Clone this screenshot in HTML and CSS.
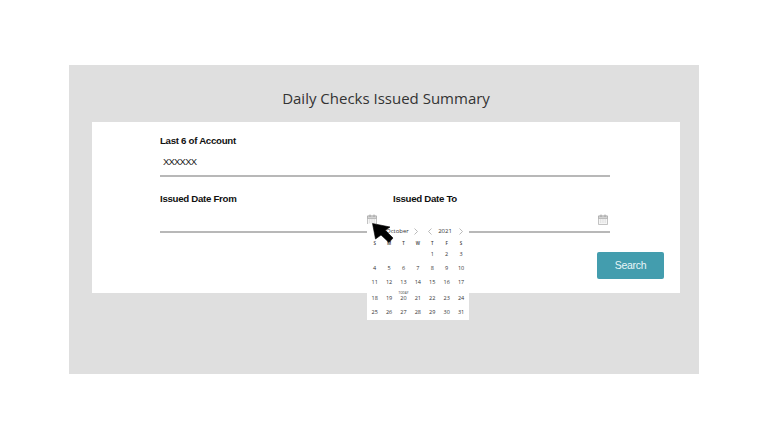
FILE: index.html
```html
<!DOCTYPE html>
<html lang="en">
<head>
<meta charset="utf-8">
<title>Daily Checks Issued Summary</title>
<link rel="stylesheet" href="styles.css">
</head>
<body>
<main class="panel">
  <h1 class="title">Daily Checks Issued Summary</h1>
  <section class="card">
    <div class="fields">
      <div class="field">
        <label class="label">Last 6 of Account</label>
        <div class="value">XXXXXX</div>
      </div>
      <div class="date-row">
        <div class="field date-field">
          <label class="label">Issued Date From</label>
          <div class="value">
            <svg class="cal-icon" viewBox="0 0 10 11"><path class="cal-body" d="M.5 2h9v8.500h-9z"/><path class="cal-head" d="M.5 2h9v2.500h-9z"/><path class="cal-ring" d="M3 .5v2.500M7 .5v2.500"/><path class="cal-grid" d="M2 6h6M2 8h6"/></svg>
          </div>
          <div class="picker">
            <div class="picker-head">
              <span class="month">October</span>
              <span class="nav nav-next"><svg class="chev" viewBox="0 0 4 7"><path d="M.5.5l3 3-3 3"/></svg></span>
              <span class="nav nav-prev"><svg class="chev" viewBox="0 0 4 7"><path d="M3.500.5l-3 3 3 3"/></svg></span>
              <span class="year">2021</span>
              <span class="nav nav-last"><svg class="chev" viewBox="0 0 4 7"><path d="M.5.5l3 3-3 3"/></svg></span>
            </div>
            <div class="days">
              <span class="dow">S</span><span class="dow">M</span><span class="dow">T</span><span class="dow">W</span><span class="dow">T</span><span class="dow">F</span><span class="dow">S</span>
              <span></span><span></span><span></span><span></span><span>1</span><span>2</span><span>3</span>
              <span>4</span><span>5</span><span>6</span><span>7</span><span>8</span><span>9</span><span>10</span>
              <span>11</span><span>12</span><span>13</span><span>14</span><span>15</span><span>16</span><span>17</span>
              <span>18</span><span>19</span><span class="today">20</span><span>21</span><span>22</span><span>23</span><span>24</span>
              <span>25</span><span>26</span><span>27</span><span>28</span><span>29</span><span>30</span><span>31</span>
            </div>
          </div>
          <svg class="cursor" viewBox="0 0 22 20"><path d="M.5.5L3.500 16 9 12l8 7.500 4-4.500-7.700-7.700L18 4z"/></svg>
        </div>
        <div class="field date-field">
          <label class="label">Issued Date To</label>
          <div class="value">
            <svg class="cal-icon cal-end" viewBox="0 0 10 11"><path class="cal-body" d="M.5 2h9v8.500h-9z"/><path class="cal-head" d="M.5 2h9v2.500h-9z"/><path class="cal-ring" d="M3 .5v2.500M7 .5v2.500"/><path class="cal-grid" d="M2 6h6M2 8h6"/></svg>
          </div>
        </div>
      </div>
    </div>
    <div class="actions"><button class="search" type="button">Search</button></div>
  </section>
</main>
</body>
</html>
```
FILE: styles.css
```css
* { box-sizing: border-box; }
html, body { margin: 0; padding: 0; background: #fff; }
body { width: 768px; height: 432px; overflow: hidden; padding: 65px 0 0 69px; font-family: "Liberation Sans", Arial, sans-serif; }
.panel { width: 630px; height: 309px; background: #dfdfdf; padding: 21px 19px 0 23px; }
.title { margin: 0 0 12px; height: 24px; font: 400 15px/24px "Open Sans", sans-serif; color: #333; text-align: center; }
.card { width: 588px; height: 171px; background: #fff; padding: 12px 16px 0 68px; }
.fields { width: 450px; display: flex; flex-direction: column; gap: 15px; }
.date-row { display: grid; grid-template-columns: 217px 217px; gap: 16px; }
.field { position: relative; }
.label { display: block; font-size: 9.700px; line-height: 14px; font-weight: 700; color: #111; letter-spacing: -.3px; }
.value { height: 29px; border-bottom: 2px solid #b8b8b8; padding: 7px 0 0 3px; font-size: 9.500px; line-height: 14px; color: #222; letter-spacing: -.8px; }
.date-field .value { height: 27px; display: flex; justify-content: flex-end; padding: 8px 0 0 0; }
.cal-icon { width: 10px; height: 11px; display: block; }
.cal-end { margin-right: 2px; }
.cal-body { fill: #f5f5f5; stroke: #aaa; stroke-width: .7; }
.cal-head { fill: #d4d4d4; stroke: #aaa; stroke-width: .7; }
.cal-ring { fill: none; stroke: #999; stroke-width: .8; }
.cal-grid { fill: none; stroke: #ccc; stroke-width: .8; stroke-dasharray: 1 .7; }
.picker { position: absolute; left: 207px; top: 32px; width: 102px; height: 96px; background: #fff; color: #333; z-index: 1; }
.picker-head { height: 14px; display: flex; align-items: center; font-size: 6px; font-family: "Open Sans", sans-serif; }
.month { margin-left: 19px; width: 21px; text-align: right; }
.nav { display: flex; justify-content: center; }
.nav-next { width: 18px; }
.nav-prev { width: 10px; }
.nav-last { width: 12px; }
.year { width: 20px; text-align: center; }
.chev { width: 4px; height: 7px; display: block; }
.chev path { fill: none; stroke: #aaa; stroke-width: .8; }
.days { display: grid; grid-template-columns: repeat(7, 14.400px); grid-template-rows: 7px 14px 14px 16px 14px 14px; padding: 0 .5px; margin-top: 2px; font: 5.500px/14px "Open Sans", sans-serif; text-align: center; }
.dow { font-size: 4.500px; line-height: 7px; height: 7px; font-weight: 600; }
.today { position: relative; }
.today::before { content: "TODAY"; position: absolute; left: 0; right: 0; top: 0; font-size: 3px; line-height: 4px; }
.cursor { position: absolute; left: 212px; top: 31px; width: 22px; height: 20px; z-index: 2; }
.cursor path { fill: #000; stroke: #000; stroke-width: .6; stroke-linejoin: round; }
.actions { display: flex; justify-content: flex-end; margin-top: 19px; }
.search { width: 67px; height: 27px; border: 0; border-radius: 2px; background: #439dae; color: #e8f6f8; font: 400 10.500px/27px "Liberation Sans", sans-serif; letter-spacing: -.3px; padding: 0; }
```
